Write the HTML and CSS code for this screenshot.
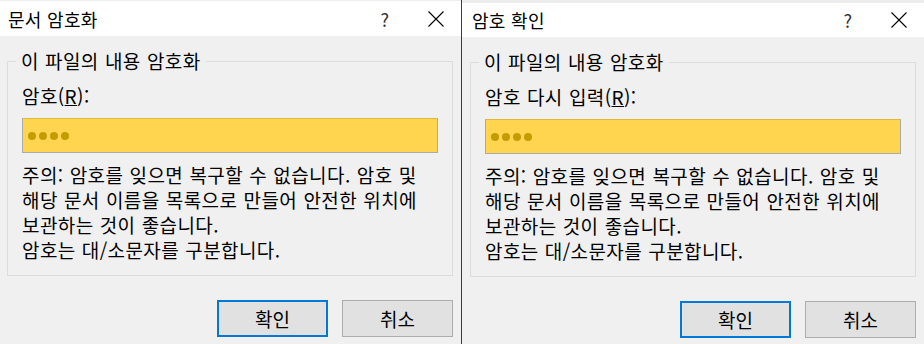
FILE: index.html
```html
<!DOCTYPE html>
<html lang="ko">
<head>
    <meta charset="UTF-8">
    <meta name="viewport" content="width=device-width, initial-scale=1.0">
    <title>문서 암호화</title>
    <link rel="stylesheet" href="styles.css">
</head>
<body>
    <div class="dialog dialog-encrypt">
        <div class="titlebar">
            <span class="title">문서 암호화</span>
            <span class="help">?</span>
            <svg class="close" width="16" height="16" viewBox="0 0 16 16">
                <path d="M0.5 0.5 L15.5 15.5 M15.5 0.5 L0.5 15.5" stroke="#000" stroke-width="1.1" fill="none"/>
            </svg>
        </div>
        <div class="body">
            <fieldset class="group">
                <legend>이 파일의 내용 암호화</legend>
                <div class="label">암호(<u>R</u>):</div>
                <div class="password">
                    <span class="dot"></span><span class="dot"></span><span class="dot"></span><span class="dot"></span>
                </div>
                <p class="note">주의: 암호를 잊으면 복구할 수 없습니다. 암호 및<br>해당 문서 이름을 목록으로 만들어 안전한 위치에<br>보관하는 것이 좋습니다.</p>
                <p class="note">암호는 대/소문자를 구분합니다.</p>
            </fieldset>
            <div class="buttons">
                <button class="btn btn-default">확인</button>
                <button class="btn">취소</button>
            </div>
        </div>
    </div>

    <div class="dialog dialog-confirm">
        <div class="titlebar">
            <span class="title">암호 확인</span>
            <span class="help">?</span>
            <svg class="close" width="16" height="16" viewBox="0 0 16 16">
                <path d="M0.5 0.5 L15.5 15.5 M15.5 0.5 L0.5 15.5" stroke="#000" stroke-width="1.1" fill="none"/>
            </svg>
        </div>
        <div class="body">
            <fieldset class="group">
                <legend>이 파일의 내용 암호화</legend>
                <div class="label">암호 다시 입력(<u>R</u>):</div>
                <div class="password">
                    <span class="dot"></span><span class="dot"></span><span class="dot"></span><span class="dot"></span>
                </div>
                <p class="note">주의: 암호를 잊으면 복구할 수 없습니다. 암호 및<br>해당 문서 이름을 목록으로 만들어 안전한 위치에<br>보관하는 것이 좋습니다.</p>
                <p class="note">암호는 대/소문자를 구분합니다.</p>
            </fieldset>
            <div class="buttons">
                <button class="btn btn-default">확인</button>
                <button class="btn">취소</button>
            </div>
        </div>
    </div>
</body>
</html>
```

FILE: styles.css
```css
body {
    margin: 0;
    padding: 0;
    display: flex;
    height: 344px;
    overflow: hidden;
    background: #f0f0f0;
    font-family: "Noto Sans CJK KR", "Noto Sans", sans-serif;
    color: #000;
}

.dialog {
    width: 462px;
    flex: none;
    display: flex;
    flex-direction: column;
    background: #f0f0f0;
}

.dialog-encrypt {
    margin-left: -1px;
    padding-top: 1px;
    background: #f0f0f0;
}

.dialog-confirm {
    border-left: 1px solid #3c3c3c;
    padding-top: 3px;
    background: #ececec;
}

.titlebar {
    height: 35px;
    background: #fff;
    display: flex;
    align-items: center;
    padding-left: 9px;
}

.dialog-confirm .titlebar {
    height: 34px;
    padding-left: 10px;
}

.title {
    flex: 1;
    font-size: 18px;
    letter-spacing: 0.3px;
}

.help {
    font-size: 18px;
    color: #333;
    margin-right: 39px;
}

.close {
    margin-right: 17px;
}

.body {
    flex: 1;
    background: #f0f0f0;
    padding: 0 8px;
}

.group {
    margin: 13px 0 0;
    padding: 11px 14px 13px;
    border: 1px solid #dcdcdc;
    font-size: 19px;
    letter-spacing: 0.4px;
    word-spacing: 0.5px;
}

.group legend {
    margin-left: -6px;
    padding: 0 5px;
    line-height: 24px;
}

.label {
    line-height: 24px;
    margin-bottom: 10px;
}

.password {
    height: 33px;
    background: #ffd54f;
    border: 1px solid #aaa;
    border-top-color: #e0b83c;
    display: flex;
    align-items: center;
    gap: 3px;
    padding-left: 5px;
}

.dot {
    width: 8px;
    height: 8px;
    border-radius: 50%;
    background: #c49c00;
}

.note {
    margin: 0;
    line-height: 25px;
    white-space: nowrap;
}

.password + .note {
    margin-top: 9px;
}

.buttons {
    display: flex;
    justify-content: flex-end;
    gap: 14px;
    margin-top: 24px;
}

.btn {
    width: 111px;
    height: 37px;
    background: #e1e1e1;
    border: 1px solid #adadad;
    font-family: inherit;
    font-size: 19px;
    color: #000;
    padding: 0;
}

.btn-default {
    border: 2px solid #0078d7;
}
```
